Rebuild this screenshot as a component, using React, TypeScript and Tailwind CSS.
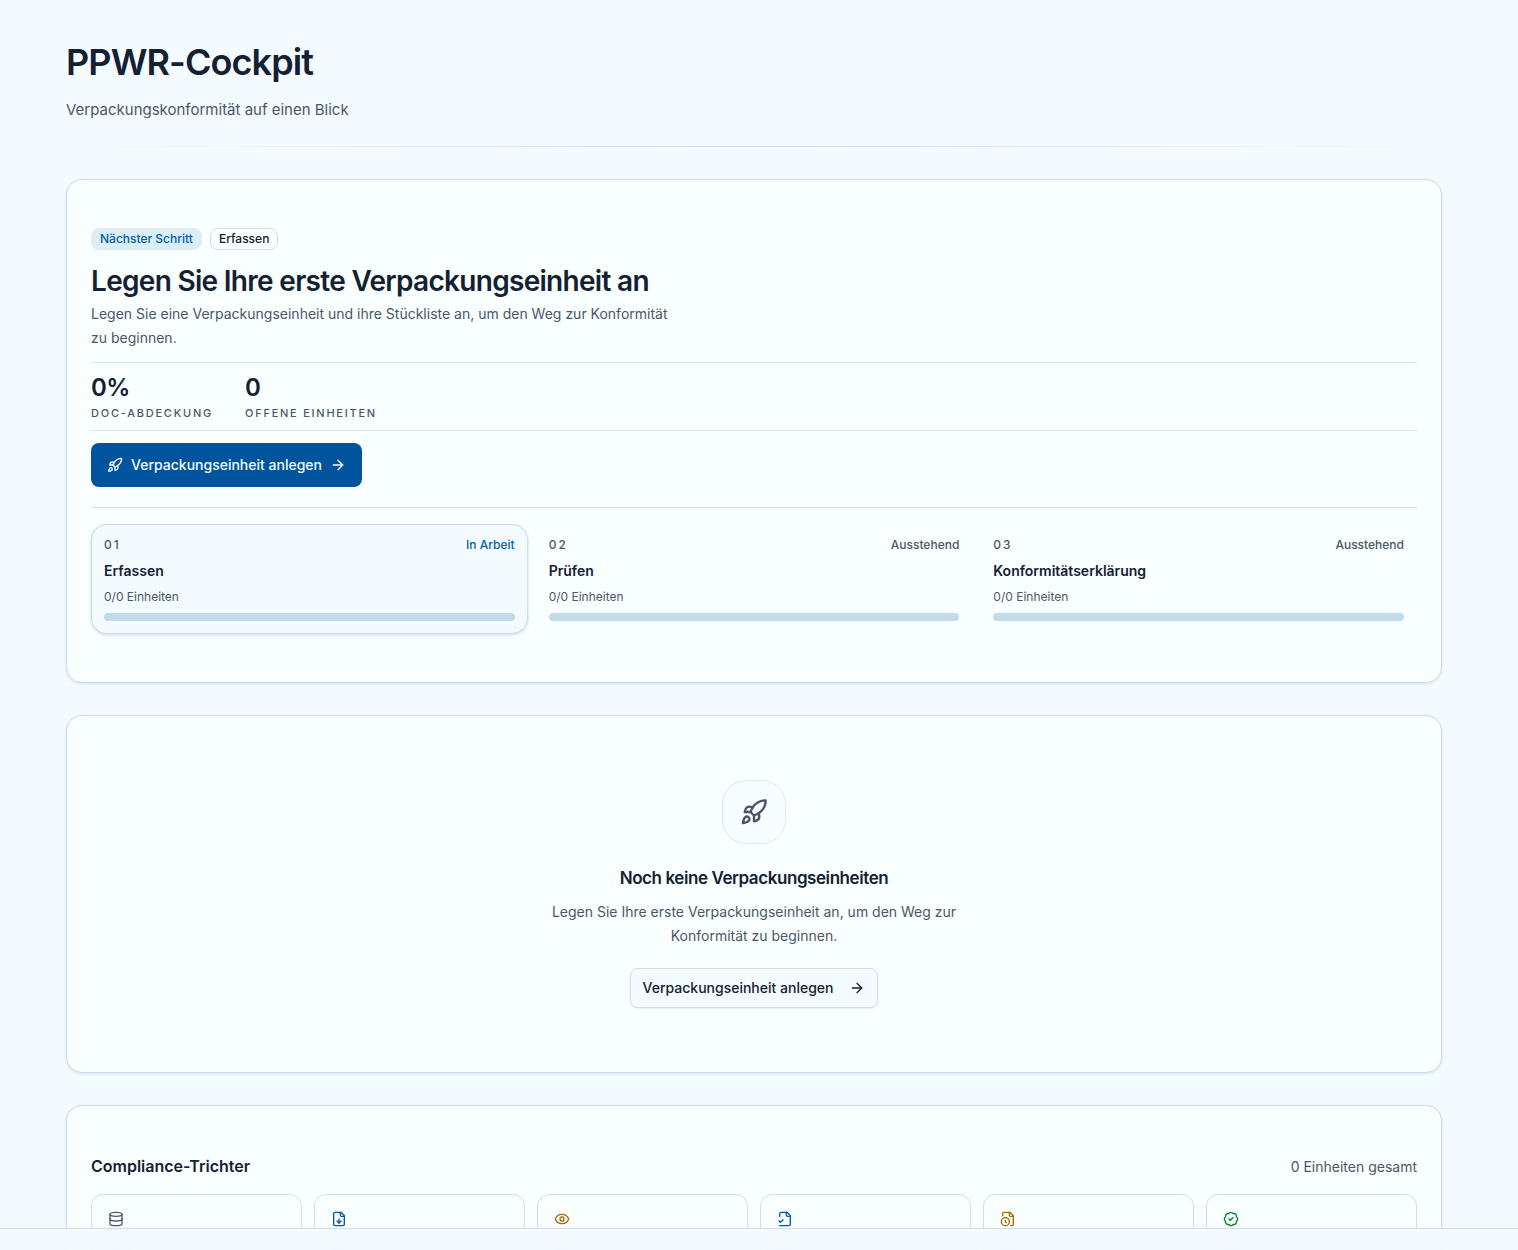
import { ArrowRight, BadgeCheck, Database, Eye, Rocket } from 'lucide-react';
import type { ComponentType, ReactNode } from 'react';

interface IconProps {
  className?: string;
}

interface Step {
  number: string;
  title: string;
  status: string;
  active?: boolean;
}

interface FunnelStage {
  id: string;
  icon: ComponentType<IconProps>;
  color: string;
}

function FileDownIcon({ className = '' }: IconProps) {
  return (
    <svg className={className} viewBox="0 0 24 24" fill="none" stroke="currentColor" strokeWidth={2} strokeLinecap="round" strokeLinejoin="round">
      <path d="M15 2H6a2 2 0 0 0-2 2v16a2 2 0 0 0 2 2h12a2 2 0 0 0 2-2V7Z" />
      <path d="M14 2v4a2 2 0 0 0 2 2h4" />
      <path d="M12 18v-6" />
      <path d="m9 15 3 3 3-3" />
    </svg>
  );
}

function FileCheckIcon({ className = '' }: IconProps) {
  return (
    <svg className={className} viewBox="0 0 24 24" fill="none" stroke="currentColor" strokeWidth={2} strokeLinecap="round" strokeLinejoin="round">
      <path d="M4 22h14a2 2 0 0 0 2-2V7l-5-5H6a2 2 0 0 0-2 2v4" />
      <path d="M14 2v4a2 2 0 0 0 2 2h4" />
      <path d="m3 15 2 2 4-4" />
    </svg>
  );
}

function FileClockIcon({ className = '' }: IconProps) {
  return (
    <svg className={className} viewBox="0 0 24 24" fill="none" stroke="currentColor" strokeWidth={2} strokeLinecap="round" strokeLinejoin="round">
      <path d="M16 22h2a2 2 0 0 0 2-2V7l-5-5H6a2 2 0 0 0-2 2v3" />
      <path d="M14 2v4a2 2 0 0 0 2 2h4" />
      <circle cx="8" cy="16" r="6" />
      <path d="M9.5 17.5 8 16.25V14" />
    </svg>
  );
}

const steps: Step[] = [
  { number: '01', title: 'Erfassen', status: 'In Arbeit', active: true },
  { number: '02', title: 'Prüfen', status: 'Ausstehend' },
  { number: '03', title: 'Konformitätserklärung', status: 'Ausstehend' },
];

const stages: FunnelStage[] = [
  { id: 'data', icon: Database, color: 'text-[#4b5768]' },
  { id: 'import', icon: FileDownIcon, color: 'text-[#0059a3]' },
  { id: 'review', icon: Eye, color: 'text-[#ad6800]' },
  { id: 'checked', icon: FileCheckIcon, color: 'text-[#0059a3]' },
  { id: 'pending', icon: FileClockIcon, color: 'text-[#ad6800]' },
  { id: 'compliant', icon: BadgeCheck, color: 'text-[#008320]' },
];

function Card({ children, className = '' }: { children: ReactNode; className?: string }) {
  return (
    <section className={`rounded-2xl border border-[#cddeea] bg-[#f9feff] px-6 shadow-[0_1px_3px_rgba(40,70,120,0.14)] ${className}`}>
      {children}
    </section>
  );
}

function StepCard({ step }: { step: Step }) {
  return (
    <li
      className={`flex flex-col gap-2 rounded-2xl border p-3 ${
        step.active ? 'border-[#cddeee] bg-[#f4fbff] shadow-[0_1px_3px_rgba(40,70,120,0.2)]' : 'border-transparent'
      }`}
    >
      <div className="flex items-center justify-between text-xs font-medium">
        <span className="tracking-[2px] text-[#4b5768]">{step.number}</span>
        <span className={step.active ? 'text-[#0060a8]' : 'text-[#4b5768]'}>{step.status}</span>
      </div>
      <h3 className="text-sm font-semibold">{step.title}</h3>
      <p className="text-xs text-[#4b5768]">0/0 Einheiten</p>
      <div className="h-2 rounded-full bg-[#c0dcea]" role="progressbar" aria-label={step.title} aria-valuenow={0} />
    </li>
  );
}

function Stat({ value, label }: { value: string; label: string }) {
  return (
    <div className="flex flex-col-reverse gap-1">
      <dt className="text-[11px] leading-4 font-medium tracking-[0.16em] text-[#4b5768] uppercase">{label}</dt>
      <dd className="text-2xl leading-[26px] font-semibold tracking-tight">{value}</dd>
    </div>
  );
}

export default function App() {
  return (
    <div className="h-screen overflow-hidden bg-[#f3fbff] pr-[10px] font-['Inter',sans-serif] text-[#132132]">
      <main className="mx-auto flex max-w-[1440px] flex-col gap-8 px-8 pt-10">
        <header>
          <h1 className="text-4xl leading-[44px] font-semibold tracking-tight">PPWR-Cockpit</h1>
          <p className="mt-3 text-[15px] leading-7 text-[#4b5768]">Verpackungskonformität auf einen Blick</p>
          <div className="mt-[22px] h-px bg-linear-to-r from-transparent via-[#cddeea] to-transparent" />
        </header>

        {/* Next step */}
        <Card className="py-12">
          <div className="flex gap-2 text-xs font-medium">
            <span className="rounded-lg border border-[#dbeef6] bg-[#dbeef6] px-2 py-[2px] text-[#0060a8]">Nächster Schritt</span>
            <span className="rounded-lg border border-[#cddeea] px-2 py-[2px]">Erfassen</span>
          </div>
          <h2 className="mt-3 text-[28px] leading-[38px] font-semibold tracking-tight">
            Legen Sie Ihre erste Verpackungseinheit an
          </h2>
          <p className="mt-[2px] max-w-[592px] text-sm leading-6 text-[#4b5768]">
            Legen Sie eine Verpackungseinheit und ihre Stückliste an, um den Weg zur Konformität zu beginnen.
          </p>

          <dl className="mt-3 flex gap-8 border-y border-[#d9e8f1] pt-3 pb-[9px]">
            <Stat value="0%" label="DoC-Abdeckung" />
            <Stat value="0" label="Offene Einheiten" />
          </dl>

          <button type="button" className="mt-3 flex h-11 items-center gap-2 rounded-lg bg-[#00539d] px-4 text-sm font-medium text-[#f4fbff]">
            <Rocket className="size-4" />
            Verpackungseinheit anlegen
            <ArrowRight className="size-4" />
          </button>

          <ol className="mt-5 grid grid-cols-3 gap-2 border-t border-[#cddeea] pt-4">
            {steps.map((step) => (
              <StepCard key={step.number} step={step} />
            ))}
          </ol>
        </Card>

        {/* Empty state */}
        <Card className="flex flex-col items-center py-16 text-center">
          <div className="flex size-16 items-center justify-center rounded-3xl border border-[#dceaf5] bg-[#f7fcff] text-[#4b5768]">
            <Rocket className="size-7" />
          </div>
          <h2 className="mt-5 text-[17px] leading-7 font-semibold tracking-tight">Noch keine Verpackungseinheiten</h2>
          <p className="mt-2 max-w-[448px] text-sm leading-6 text-[#4b5768]">
            Legen Sie Ihre erste Verpackungseinheit an, um den Weg zur Konformität zu beginnen.
          </p>
          <button
            type="button"
            className="mt-5 flex h-10 items-center gap-4 rounded-lg border border-[#cddeee] bg-[#f4fbff] px-3 text-sm font-medium shadow-[0_1px_2px_rgba(40,70,120,0.08)]"
          >
            Verpackungseinheit anlegen
            <ArrowRight className="size-4" />
          </button>
        </Card>

        {/* Funnel */}
        <Card className="py-12">
          <div className="flex items-baseline justify-between">
            <h2 className="text-base font-semibold">Compliance-Trichter</h2>
            <span className="text-sm text-[#4b5768]">0 Einheiten gesamt</span>
          </div>
          <div className="mt-4 grid grid-cols-6 gap-3">
            {stages.map(({ id, icon: Icon, color }) => (
              <div key={id} className="rounded-xl border border-[#cddeea] p-4">
                <Icon className={`size-4 ${color}`} />
                {/* soft glow that shines through the bottom bar */}
                <div className="mt-5 size-4 rounded-full bg-[#6f8fe0] blur-sm" />
              </div>
            ))}
          </div>
        </Card>
      </main>

      <div className="fixed inset-x-0 bottom-0 h-[22px] border-t border-[#cddeea] bg-[#f3fbff]/90 backdrop-blur-md" />
    </div>
  );
}
